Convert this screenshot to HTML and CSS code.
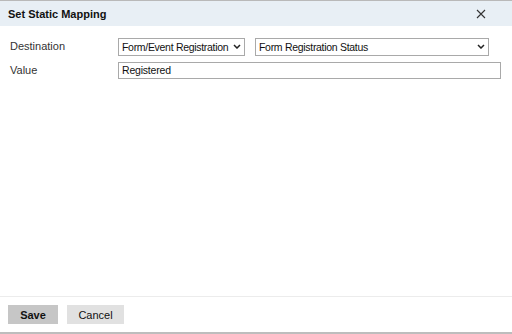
FILE: index.html
```html
<!DOCTYPE html>
<html lang="en">
<head>
  <meta charset="UTF-8">
  <meta name="viewport" content="width=device-width, initial-scale=1.0">
  <title>Set Static Mapping</title>
  <link rel="stylesheet" href="styles.css">
</head>
<body>
  <div class="dialog">
    <div class="dialog-header">
      <span class="dialog-title">Set Static Mapping</span>
      <button class="close-btn" type="button" aria-label="Close">
        <svg width="10" height="10" viewBox="0 0 10 10"><path d="M1 1L9 9M9 1L1 9" stroke="#333" stroke-width="1.1" fill="none"/></svg>
      </button>
    </div>
    <div class="dialog-body">
      <div class="form-row">
        <label class="form-label">Destination</label>
        <div class="field-group">
          <div class="select-wrap first">
            <select>
              <option>Form/Event Registration</option>
            </select>
            <svg class="chevron" width="8" height="5" viewBox="0 0 8 5"><path d="M1 1L4 4L7 1" stroke="#222" stroke-width="1.5" fill="none"/></svg>
          </div>
          <div class="select-wrap second">
            <select>
              <option>Form Registration Status</option>
            </select>
            <svg class="chevron" width="8" height="5" viewBox="0 0 8 5"><path d="M1 1L4 4L7 1" stroke="#222" stroke-width="1.5" fill="none"/></svg>
          </div>
        </div>
      </div>
      <div class="form-row">
        <label class="form-label">Value</label>
        <input class="text-input" type="text" value="Registered">
      </div>
    </div>
    <div class="dialog-footer">
      <button class="btn btn-save" type="button">Save</button>
      <button class="btn btn-cancel" type="button">Cancel</button>
    </div>
  </div>
</body>
</html>
```

FILE: styles.css
```css
* {
  box-sizing: border-box;
}
body {
  margin: 0;
  font-family: 'Liberation Sans', Arial, sans-serif;
  background: #fff;
  color: #222;
}
.dialog {
  width: 512px;
  height: 334px;
  display: flex;
  flex-direction: column;
  border-top: 1px solid #b9b9b9;
  border-bottom: 2px solid #bdbdbd;
  background: #fff;
}
.dialog-header {
  height: 25px;
  background: #e8eff5;
  display: flex;
  align-items: center;
  justify-content: space-between;
  padding: 0 26px 0 8px;
}
.dialog-title {
  font-size: 11px;
  font-weight: bold;
  color: #111;
}
.close-btn {
  border: none;
  background: none;
  padding: 0;
  display: flex;
  cursor: pointer;
}
.dialog-body {
  flex: 1;
  padding: 11px 11px 0 10px;
  display: flex;
  flex-direction: column;
  gap: 6px;
}
.form-row {
  display: flex;
  align-items: center;
  height: 18px;
}
.form-label {
  width: 108px;
  flex-shrink: 0;
  font-size: 11px;
  color: #333;
}
.field-group {
  display: flex;
  gap: 10px;
  height: 18px;
}
.select-wrap {
  position: relative;
  height: 18px;
}
.select-wrap.first {
  width: 127px;
}
.select-wrap.second {
  width: 234px;
}
.select-wrap select {
  appearance: none;
  -webkit-appearance: none;
  width: 100%;
  height: 18px;
  border: 1px solid #a9a9a9;
  border-radius: 0;
  background: #fff;
  font-family: 'Liberation Sans', Arial, sans-serif;
  font-size: 10.5px;
  letter-spacing: -0.3px;
  color: #111;
  padding: 0 14px 0 3px;
  outline: none;
}
.chevron {
  position: absolute;
  right: 4px;
  top: 7px;
  pointer-events: none;
}
.text-input {
  width: 383px;
  height: 17px;
  border: 1px solid #a9a9a9;
  border-radius: 0;
  padding: 0 3px;
  font-family: 'Liberation Sans', Arial, sans-serif;
  font-size: 10.5px;
  letter-spacing: -0.2px;
  color: #111;
  outline: none;
}
.dialog-footer {
  height: 36px;
  border-top: 1px solid #ececec;
  display: flex;
  align-items: center;
  gap: 9px;
  padding: 0 8px;
}
.btn {
  height: 19px;
  border: none;
  border-radius: 0;
  font-family: 'Liberation Sans', Arial, sans-serif;
  font-size: 11px;
  color: #111;
  cursor: pointer;
  padding: 0;
}
.btn-save {
  width: 50px;
  background: #c6c6c6;
  font-weight: bold;
}
.btn-cancel {
  width: 57px;
  background: #e1e1e1;
}
```
